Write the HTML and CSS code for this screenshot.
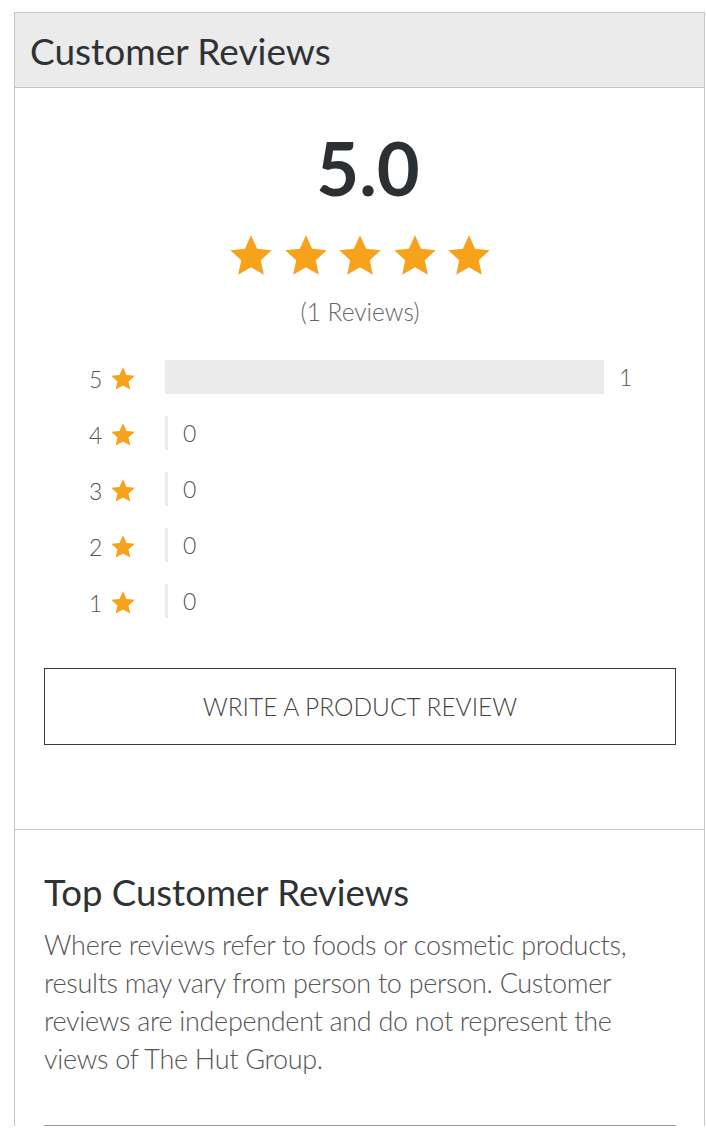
FILE: index.html
```html
<!DOCTYPE html>
<html lang="en">
<head>
<meta charset="utf-8">
<title>Customer Reviews</title>
<link rel="stylesheet" href="styles.css">
</head>
<body>
<svg width="0" height="0" class="defs" aria-hidden="true">
  <symbol id="star" viewBox="0 0 24 24">
    <polygon points="12,1.2 15.2,8.2 22.8,9 17.1,14.2 18.7,21.8 12,17.9 5.3,21.8 6.9,14.2 1.2,9 8.8,8.2"/>
  </symbol>
</svg>
<section class="reviews">
  <header class="reviews-header">
    <h2 class="reviews-title">Customer Reviews</h2>
  </header>
  <div class="summary">
    <div class="score">5.0</div>
    <div class="stars">
      <svg class="star-lg"><use href="#star"/></svg>
      <svg class="star-lg"><use href="#star"/></svg>
      <svg class="star-lg"><use href="#star"/></svg>
      <svg class="star-lg"><use href="#star"/></svg>
      <svg class="star-lg"><use href="#star"/></svg>
    </div>
    <div class="count-total">(1 Reviews)</div>
    <ul class="breakdown">
      <li class="row">
        <span class="row-label">5<svg class="star-sm"><use href="#star"/></svg></span>
        <span class="track"><span class="fill" style="width:100%"></span><span class="row-count">1</span></span>
      </li>
      <li class="row">
        <span class="row-label">4<svg class="star-sm"><use href="#star"/></svg></span>
        <span class="track"><span class="fill" style="width:0%"></span><span class="row-count">0</span></span>
      </li>
      <li class="row">
        <span class="row-label">3<svg class="star-sm"><use href="#star"/></svg></span>
        <span class="track"><span class="fill" style="width:0%"></span><span class="row-count">0</span></span>
      </li>
      <li class="row">
        <span class="row-label">2<svg class="star-sm"><use href="#star"/></svg></span>
        <span class="track"><span class="fill" style="width:0%"></span><span class="row-count">0</span></span>
      </li>
      <li class="row">
        <span class="row-label">1<svg class="star-sm"><use href="#star"/></svg></span>
        <span class="track"><span class="fill" style="width:0%"></span><span class="row-count">0</span></span>
      </li>
    </ul>
    <button class="write-btn" type="button">WRITE A PRODUCT REVIEW</button>
  </div>
  <div class="top-reviews">
    <h3 class="top-title">Top Customer Reviews</h3>
    <p class="disclaimer">Where reviews refer to foods or cosmetic products, results may vary from person to person. Customer reviews are independent and do not represent the views of The Hut Group.</p>
    <hr class="rule">
  </div>
</section>
</body>
</html>
```
FILE: styles.css
```css
html, body {
  margin: 0;
  padding: 0;
  background: #fff;
}
body {
  font-family: Lato, "Open Sans", "Liberation Sans", sans-serif;
  color: #333;
}
.defs {
  position: absolute;
  width: 0;
  height: 0;
  overflow: hidden;
}
.reviews {
  margin: 12px 0 0 14px;
  width: 691px;
  box-sizing: border-box;
  border: 1px solid #c6c6c6;
  border-bottom: none;
}
.reviews-header {
  background: #ebebeb;
  height: 74px;
  border-bottom: 1px solid #c6c6c6;
  display: flex;
  align-items: center;
  padding-left: 15px;
}
.reviews-title {
  margin: 0;
  font-size: 37px;
  font-weight: 400;
  color: #2f3235;
  line-height: 1;
}
.summary {
  padding: 43px 28px 84px 29px;
  display: flex;
  flex-direction: column;
  align-items: center;
  border-bottom: 1px solid #c6c6c6;
}
.score {
  font-size: 74px;
  font-weight: 700;
  color: #2d3033;
  line-height: 74px;
  margin-left: 16px;
}
.stars {
  display: flex;
  gap: 8.5px;
  margin-top: 28px;
}
.star-lg {
  width: 46px;
  height: 46px;
  fill: #f7a21b;
}
.count-total {
  margin-top: 19px;
  font-size: 24.5px;
  font-weight: 300;
  color: #666;
  line-height: 28px;
}
.breakdown {
  list-style: none;
  margin: 34px 0 0 0;
  padding: 0 0 0 45px;
  align-self: stretch;
  display: flex;
  flex-direction: column;
  gap: 22px;
}
.row {
  display: flex;
  align-items: center;
  height: 34px;
}
.row-label {
  width: 76px;
  display: flex;
  align-items: center;
  font-size: 23px;
  font-weight: 300;
  color: #555;
  padding-top: 4px;
}
.star-sm {
  width: 26px;
  height: 26px;
  fill: #f7a21b;
  margin-left: 8px;
}
.track {
  width: 439px;
  height: 34px;
  display: flex;
  align-items: center;
}
.fill {
  flex-shrink: 0;
  min-width: 3px;
  height: 34px;
  background: #ebebeb;
}
.row-count {
  margin-left: 15px;
  font-size: 23px;
  font-weight: 300;
  color: #555;
  flex-shrink: 0;
}
.write-btn {
  align-self: stretch;
  margin-top: 50px;
  height: 77px;
  background: #fff;
  border: 1px solid #3a3a3a;
  font-family: Lato, "Open Sans", "Liberation Sans", sans-serif;
  font-size: 24.5px;
  font-weight: 300;
  color: #444;
  letter-spacing: 0;
  padding: 0;
  cursor: pointer;
}
.top-reviews {
  padding: 40px 28px 0 29px;
}
.top-title {
  margin: 0;
  font-size: 36.6px;
  font-weight: 400;
  color: #2f3235;
  line-height: 44px;
}
.disclaimer {
  margin: 12px 0 0 0;
  font-size: 27px;
  letter-spacing: -0.3px;
  font-weight: 300;
  color: #555;
  line-height: 38px;
}
.rule {
  margin: 47px 0 0 0;
  border: none;
  border-top: 1px solid #9a9a9a;
  height: 0;
}
```
